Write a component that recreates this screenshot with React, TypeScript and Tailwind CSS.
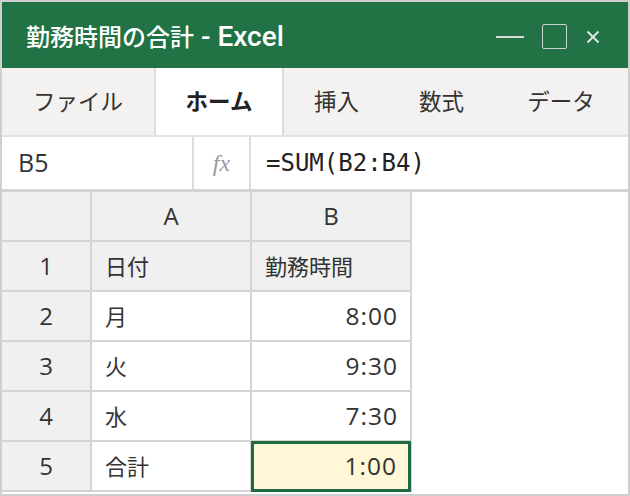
const jp = { fontFamily: '"Open Sans", "Noto Sans CJK JP", sans-serif' };

const tabs = [
  { label: "ファイル", w: "w-[152px]" },
  { label: "ホーム", w: "w-[130px]", active: true },
  { label: "挿入", w: "w-[105px]" },
  { label: "数式", w: "w-[105px]" },
  { label: "データ", w: "w-[134px]" },
];

const rows = [
  { n: "1", a: "日付", b: "勤務時間", head: true },
  { n: "2", a: "月", b: "8:00" },
  { n: "3", a: "火", b: "9:30" },
  { n: "4", a: "水", b: "7:30" },
  { n: "5", a: "合計", b: "1:00", selected: true },
];

function Cell({ children, className = "" }: { children?: React.ReactNode; className?: string }) {
  return <div className={`h-[48px] flex items-center text-[22px] text-[#333] ${className}`}>{children}</div>;
}

export default function App() {
  return (
    <div
      className="w-[630px] h-[496px] border-2 border-[#cfcfcf] bg-white flex flex-col overflow-hidden"
      style={jp}
    >
      {/* title bar */}
      <div className="h-[66px] shrink-0 bg-[#217346] flex items-center pl-[24px] pr-[28px] pt-[3px]">
        <span
          className="text-white text-[24px] font-medium"
          style={{ fontFamily: '"Roboto", "Noto Sans CJK JP", sans-serif' }}
        >
          勤務時間の合計<span className="text-[28px]"> - Excel</span>
        </span>
        <div className="ml-auto flex items-center">
          <div className="w-[28px] h-[2px] bg-[#d6dcd8]" />
          <div className="ml-[18px] w-[25px] h-[25px] border-[1.5px] border-[#c9d5ce] rounded-[2px]" />
          <svg className="ml-[19px]" width="14" height="14" viewBox="0 0 14 14">
            <path d="M1.5 1.5 L12.5 12.5 M12.5 1.5 L1.5 12.5" stroke="#dfe5e1" strokeWidth="2" />
          </svg>
        </div>
      </div>

      {/* ribbon tabs */}
      <div className="h-[69px] shrink-0 bg-[#f3f2f1] flex border-b-2 border-[#e3e2e0]">
        {tabs.map((t) => (
          <div
            key={t.label}
            className={`${t.w} shrink-0 flex items-center justify-center text-[22.5px] ${
              t.active ? "bg-white border-x-2 border-[#dddcda] font-bold text-[#222]" : "text-[#333]"
            }`}
          >
            {t.label}
          </div>
        ))}
      </div>

      {/* formula bar */}
      <div className="h-[55px] shrink-0 flex border-b-[3px] border-[#d4d4d4]">
        <div className="w-[192px] border-r-2 border-[#dcdcdc] flex items-center pl-[16px] text-[25px] text-[#333]">
          B5
        </div>
        <div
          className="w-[57px] border-r-2 border-[#dcdcdc] flex items-center justify-center text-[24px] italic text-[#9a9a9a]"
          style={{ fontFamily: '"Liberation Serif", serif' }}
        >
          fx
        </div>
        <div
          className="flex items-center pl-[15px] text-[24px] text-[#222]"
          style={{ fontFamily: '"DejaVu Sans Mono", monospace' }}
        >
          =SUM(B2:B4)
        </div>
      </div>

      {/* grid */}
      <div className="w-[410px] grid grid-cols-[88px_158px_158px] gap-[2px] bg-[#d4d4d4] pr-[2px] pb-[2px]">
        <Cell className="bg-[#f0f0f0]" />
        <Cell className="bg-[#f0f0f0] justify-center text-[24px]">A</Cell>
        <Cell className="bg-[#f0f0f0] justify-center text-[24px]">B</Cell>
        {rows.map((r) => (
          <div key={r.n} className="contents">
            <Cell className="bg-[#f0f0f0] justify-center text-[24px]">{r.n}</Cell>
            <Cell className={`${r.head ? "bg-[#f0f0f0]" : "bg-white"} pl-[13px]`}>{r.a}</Cell>
            {r.selected ? (
              <div className="relative h-[48px]">
                <div className="absolute -top-[1px] -left-[1px] -right-[1px] -bottom-[2px] bg-[#fff7d6] border-[3px] border-[#1f6b41] flex items-center justify-end pr-[11px] text-[24.5px] tracking-[1px] text-[#333]">
                  {r.b}
                </div>
              </div>
            ) : (
              <Cell
                className={`${
                  r.head ? "bg-[#f0f0f0] pl-[13px]" : "bg-white justify-end pr-[12px] text-[24.5px] tracking-[1px]"
                }`}
              >
                {r.b}
              </Cell>
            )}
          </div>
        ))}
      </div>
    </div>
  );
}
